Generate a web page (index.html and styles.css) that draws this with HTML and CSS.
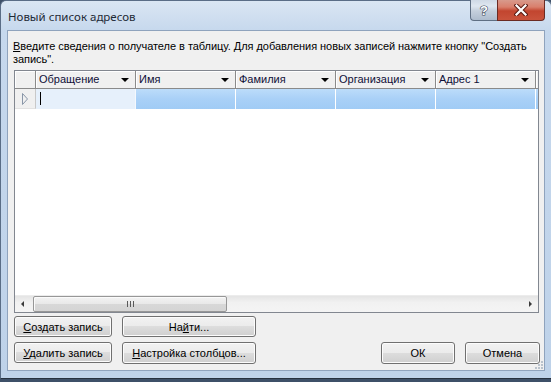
FILE: index.html
```html
<!DOCTYPE html>
<html lang="ru">
<head>
<meta charset="utf-8">
<title>Новый список адресов</title>
<link rel="stylesheet" href="styles.css">
</head>
<body>
<div class="window">
  <div class="titlebar">
    <span class="title">Новый список адресов</span>
    <div class="caption-btns">
      <div class="cbtn help">
        <svg width="12" height="14" viewBox="0 0 12 14"><text x="6" y="12" text-anchor="middle" class="qmark">?</text></svg>
      </div>
      <div class="cbtn close">
        <svg width="14" height="12" viewBox="0 0 14 12">
          <path d="M2.5 1.5 L11.5 10.5 M11.5 1.5 L2.5 10.5" stroke="#5a1a12" stroke-width="4.2" stroke-linecap="square" fill="none"/>
          <path d="M2.5 1.5 L11.5 10.5 M11.5 1.5 L2.5 10.5" stroke="#ffffff" stroke-width="2.2" stroke-linecap="square" fill="none"/>
        </svg>
      </div>
    </div>
  </div>
  <div class="client">
    <p class="intro"><u>В</u>ведите сведения о получателе в таблицу. Для добавления новых записей нажмите кнопку "Создать<br>запись".</p>
    <div class="grid">
      <div class="ghead">
        <div class="sel"></div>
        <div class="hcell"><span>Обращение</span><i class="drop"></i></div>
        <div class="hcell"><span>Имя</span><i class="drop"></i></div>
        <div class="hcell"><span>Фамилия</span><i class="drop"></i></div>
        <div class="hcell"><span>Организация</span><i class="drop"></i></div>
        <div class="hcell"><span>Адрес 1</span><i class="drop"></i></div>
        <div class="hcell rest"></div>
      </div>
      <div class="grow">
        <div class="sel">
          <svg width="8" height="14" viewBox="0 0 8 14"><polygon points="1.5,1.5 6.5,7 1.5,12.5" fill="none" stroke="#8996a8" stroke-width="1"/></svg>
        </div>
        <div class="dcell current"><i class="caret"></i></div>
        <div class="dcell"></div>
        <div class="dcell"></div>
        <div class="dcell"></div>
        <div class="dcell"></div>
        <div class="dcell rest"></div>
      </div>
      <div class="gfill"></div>
      <div class="hscroll">
        <div class="sbtn"><i class="arr left"></i></div>
        <div class="track">
          <div class="thumb"><i class="grip"></i></div>
        </div>
        <div class="sbtn"><i class="arr right"></i></div>
      </div>
    </div>
    <div class="actions">
      <div class="col-left">
        <button class="btn w98"><u>С</u>оздать запись</button>
        <button class="btn w98"><u>У</u>далить запись</button>
      </div>
      <div class="col-mid">
        <button class="btn w134">На<u>й</u>ти...</button>
        <button class="btn w134 tall"><u>Н</u>астройка столбцов...</button>
      </div>
      <div class="col-right">
        <button class="btn w74 tall">ОК</button>
        <button class="btn w75 tall">Отмена</button>
      </div>
    </div>
    <svg class="grip-corner" width="10" height="10" viewBox="0 0 10 10">
      <rect x="7" y="1" width="2" height="2" fill="#b9c2cc"/>
      <rect x="4" y="4" width="2" height="2" fill="#b9c2cc"/>
      <rect x="7" y="4" width="2" height="2" fill="#b9c2cc"/>
      <rect x="1" y="7" width="2" height="2" fill="#b9c2cc"/>
      <rect x="4" y="7" width="2" height="2" fill="#b9c2cc"/>
      <rect x="7" y="7" width="2" height="2" fill="#b9c2cc"/>
    </svg>
  </div>
</div>
</body>
</html>
```

FILE: styles.css
```css
* { box-sizing: border-box; }
html, body { margin: 0; padding: 0; }
body {
  width: 551px;
  height: 382px;
  overflow: hidden;
  background: #3e5068;
  font-family: "Liberation Sans", Arial, sans-serif;
  font-size: 11px;
  color: #000;
}
.window {
  width: 552px;
  height: 379px;
  border: 1px solid #5a6d86;
  border-bottom-color: #26313f;
  border-radius: 6px 6px 0 0;
  background: linear-gradient(to bottom, #dae6f3 0px, #c6d8ed 30px, #c2d5eb 200px, #bed2e9 100%);
  padding: 0 6px 7px 6px;
  display: flex;
  flex-direction: column;
}
.titlebar {
  height: 29px;
  display: flex;
  align-items: flex-start;
  justify-content: space-between;
}
.title {
  font-family: "Noto Sans", "Open Sans", sans-serif;
  font-size: 11.5px;
  color: #1e2a36;
  margin-top: 8px;
  margin-left: 1px;
}
.caption-btns {
  display: flex;
  margin-top: -1px;
}
.cbtn {
  height: 21px;
  display: flex;
  align-items: center;
  justify-content: center;
  border: 1px solid #5f6f83;
  border-top: none;
}
.help {
  width: 27px;
  border-radius: 0 0 0 4px;
  border-right: none;
  background: linear-gradient(to bottom, #cfd9e5 0%, #dfe7f0 30%, #c4cfdc 55%, #aebccd 100%);
}
.qmark {
  font-family: "Liberation Sans", Arial, sans-serif;
  font-weight: bold;
  font-size: 13px;
  fill: #ffffff;
  stroke: #3c4a5c;
  stroke-width: 1.2px;
  paint-order: stroke;
}
.close {
  width: 48px;
  border-radius: 0 0 4px 0;
  border-color: #6b2a22;
  background: linear-gradient(to bottom, #d89a8c 0%, #d97f6c 35%, #c2452f 55%, #c9533c 100%);
}
.client {
  flex: 1;
  position: relative;
  background: #f0f0f0;
  border: 1px solid #8fa3bd;
  padding: 9px 5px 0 6px;
  display: flex;
  flex-direction: column;
}
.intro {
  margin: 0 0 0 -1px;
  line-height: 13px;
  height: 26px;
  white-space: nowrap;
  letter-spacing: -0.04px;
}
.grid {
  margin-top: 4px;
  width: 525px;
  height: 243px;
  border: 1px solid #828790;
  background: #ffffff;
  display: flex;
  flex-direction: column;
}
.ghead {
  display: flex;
  height: 18px;
  border-bottom: 1px solid #8a8a8a;
  background: #f0f0f0;
}
.ghead .sel {
  width: 21px;
  border-right: 1px solid #8a8a8a;
  box-shadow: inset 1px 1px #ffffff;
}
.hcell {
  width: 100px;
  display: flex;
  align-items: center;
  justify-content: space-between;
  padding: 0 6px 0 3px;
  border-right: 1px solid #8a8a8a;
  box-shadow: inset 1px 1px #ffffff;
  color: #0f0f38;
  line-height: 17px;
}
.hcell.rest { width: 2px; padding: 0; border-right: none; }
.drop {
  width: 0;
  height: 0;
  border-left: 4px solid transparent;
  border-right: 4px solid transparent;
  border-top: 4px solid #000;
}
.grow {
  display: flex;
  height: 20px;
}
.grow .sel {
  width: 21px;
  background: #f0f0f0;
  border-right: 1px solid #c8c8c8;
  border-bottom: 1px solid #e2e2e2;
  display: flex;
  align-items: center;
  padding-left: 6px;
}
.dcell {
  width: 100px;
  border-right: 1px solid #ffffff;
  background: linear-gradient(to bottom, #bcdcfa 0%, #a9d0f7 50%, #a0cbf5 100%);
}
.dcell.current {
  background: #e6f0fb;
  border-right: 1px solid #f4f8fd;
  padding: 3px 0 0 4px;
}
.dcell.rest { width: 2px; border-right: none; }
.caret {
  display: block;
  width: 1px;
  height: 13px;
  background: #000;
}
.gfill { flex: 1; }
.hscroll {
  height: 17px;
  display: flex;
  background: linear-gradient(to bottom, #e4e4e4 0%, #f1f1f1 40%, #f4f4f4 100%);
  border-top: 1px solid #ececec;
}
.sbtn {
  width: 17px;
  display: flex;
  align-items: center;
  justify-content: center;
}
.arr {
  width: 0;
  height: 0;
  border-top: 3px solid transparent;
  border-bottom: 3px solid transparent;
}
.arr.left { border-right: 3px solid #3a3a3a; margin-left: -2px; }
.arr.right { border-left: 3px solid #3a3a3a; margin-left: 2px; }
.track {
  flex: 1;
  padding-left: 1px;
  display: flex;
}
.thumb {
  width: 194px;
  height: 16px;
  border: 1px solid #979797;
  border-radius: 2px;
  background: linear-gradient(to bottom, #f3f3f3 0%, #e8e8e8 50%, #d8d8d8 51%, #d4d4d4 100%);
  box-shadow: inset 1px 1px #fbfbfb;
  display: flex;
  align-items: center;
  justify-content: center;
}
.grip {
  display: block;
  width: 7px;
  height: 6px;
  background:
    linear-gradient(#5a5a5a, #5a5a5a) 0 0 / 1px 6px no-repeat,
    linear-gradient(#5a5a5a, #5a5a5a) 3px 0 / 1px 6px no-repeat,
    linear-gradient(#5a5a5a, #5a5a5a) 6px 0 / 1px 6px no-repeat;
}
.actions {
  margin-top: 3px;
  display: flex;
  width: 525px;
}
.col-left, .col-mid, .col-right {
  display: flex;
  flex-direction: column;
  gap: 5px;
}
.col-mid { margin-left: 10px; }
.col-right {
  margin-left: auto;
  flex-direction: row;
  align-items: flex-end;
  gap: 10px;
  margin-right: -1px;
}
.btn {
  font-family: "Liberation Sans", Arial, sans-serif;
  font-size: 11px;
  color: #000;
  height: 21px;
  padding: 0;
  border: 1px solid #707070;
  border-radius: 3px;
  background: linear-gradient(to bottom, #f2f2f2 0%, #ebebeb 49%, #dddddd 50%, #cfcfcf 100%);
  box-shadow: inset 0 0 0 1px #fcfcfc;
  text-align: center;
}
.btn.tall { height: 22px; }
.w98 { width: 98px; }
.w134 { width: 134px; }
.w74 { width: 74px; }
.w75 { width: 75px; }
.grip-corner {
  position: absolute;
  right: 0;
  bottom: 0;
}
```
